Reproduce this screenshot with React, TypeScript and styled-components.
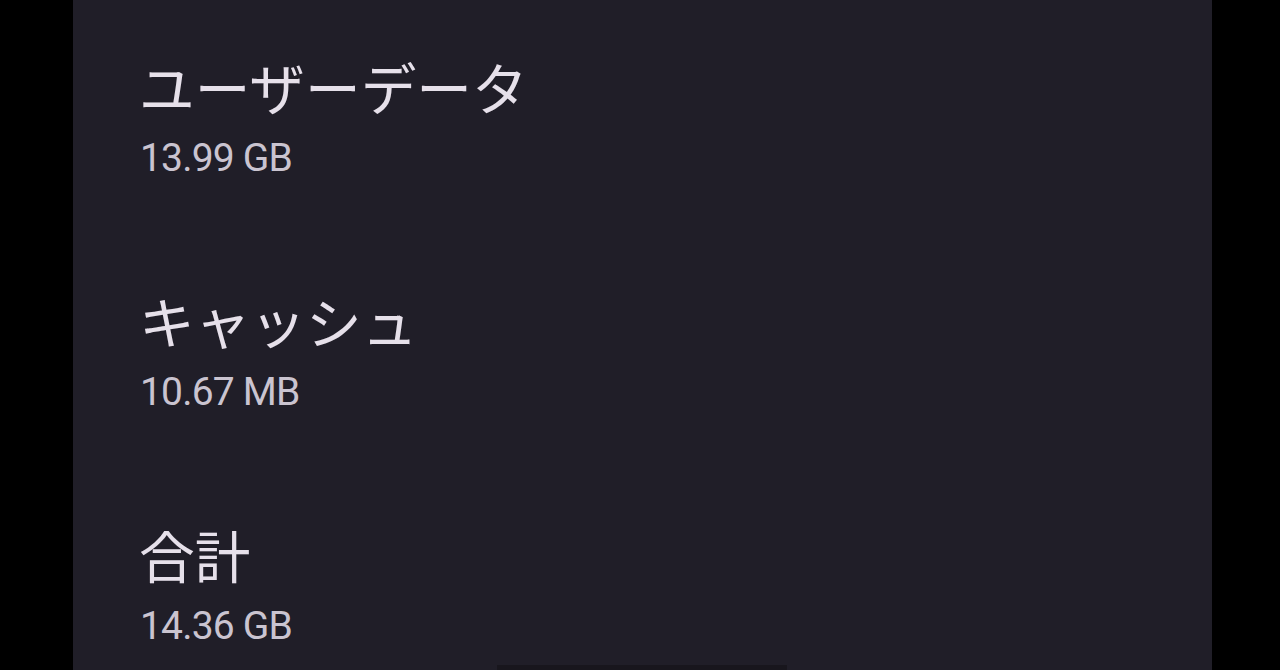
import React from "react";
import styled, { createGlobalStyle } from "styled-components";

const GlobalStyle = createGlobalStyle`
  html, body {
    margin: 0;
    padding: 0;
    background: #000;
    height: 100%;
    overflow: hidden;
  }
  #root {
    height: 100%;
  }
`;

const Screen = styled.div`
  display: flex;
  height: 670px;
  width: 1280px;
  background: #000;
`;

const Panel = styled.div`
  position: relative;
  margin-left: 73px;
  width: 1139px;
  height: 100%;
  background: #201e28;
  box-sizing: border-box;
  padding: 50px 0 0 66px;
  display: flex;
  flex-direction: column;
  gap: 100px;
`;

const Item = styled.div`
  display: flex;
  flex-direction: column;
  gap: 10px;
`;

const Title = styled.div`
  font-family: "Noto Sans CJK JP", Roboto, sans-serif;
  font-size: 55.7px;
  line-height: 72px;
  color: #e6e0ea;
`;

const Value = styled.div`
  font-family: Roboto, "Noto Sans CJK JP", sans-serif;
  font-size: 39px;
  line-height: 52px;
  letter-spacing: -0.8px;
  color: #cac4d0;
  padding-left: 1px;
`;

const HomeBar = styled.div`
  position: absolute;
  left: 424px;
  bottom: 0;
  width: 290px;
  height: 5px;
  background: #18161d;
`;

type Entry = { label: string; value: string };

const entries: Entry[] = [
  { label: "ユーザーデータ", value: "13.99 GB" },
  { label: "キャッシュ", value: "10.67 MB" },
  { label: "合計", value: "14.36 GB" },
];

export default function App() {
  return (
    <>
      <GlobalStyle />
      <Screen>
        <Panel>
          {entries.map((e) => (
            <Item key={e.label}>
              <Title>{e.label}</Title>
              <Value>{e.value}</Value>
            </Item>
          ))}
          <HomeBar />
        </Panel>
      </Screen>
    </>
  );
}
